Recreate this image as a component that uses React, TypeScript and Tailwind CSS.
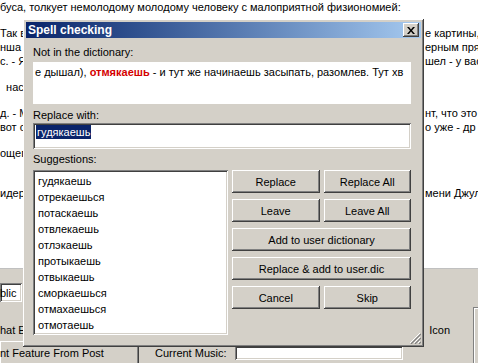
const font = "font-['Liberation_Sans',Arial,sans-serif]";

const pageLines: { left: string; right: string; mt: string }[] = [
  { left: "Так в", right: "е картины,", mt: "mt-[12px]" },
  { left: "нша к", right: "ерным пря", mt: "mt-0" },
  { left: "с. - Я", right: "шел - у вас", mt: "mt-0" },
  { left: "  нас", right: "", mt: "mt-[12px]" },
  { left: "д. - М", right: "нт, что это", mt: "mt-[12px]" },
  { left: "вот о", right: "о уже - др", mt: "mt-0" },
  { left: "ощег", right: "", mt: "mt-[12px]" },
  { left: "идерт", right: "мени Джул", mt: "mt-[26px]" },
];

const suggestions = [
  "гудякаешь",
  "отрекаешься",
  "потаскаешь",
  "отвлекаешь",
  "отлэкаешь",
  "протыкаешь",
  "отвыкаешь",
  "сморкаешься",
  "отмахаешься",
  "отмотаешь",
];

const raised =
  "bg-[#d4d0c8] shadow-[inset_-1px_-1px_#404040,inset_1px_1px_#ffffff,inset_-2px_-2px_#808080,inset_2px_2px_#d4d0c8]";
const sunken =
  "bg-white shadow-[inset_1px_1px_#808080,inset_-1px_-1px_#ffffff,inset_2px_2px_#404040,inset_-2px_-2px_#d4d0c8]";

function Btn({ label, className = "" }: { label: string; className?: string }) {
  return (
    <div
      className={`${raised} flex h-[23px] items-center justify-center text-[11px] text-black ${className}`}
    >
      {label}
    </div>
  );
}

function SpellDialog() {
  return (
    <div
      className={`absolute left-[23px] top-[19px] flex h-[328px] w-[401px] flex-col p-[3px] ${raised} shadow-[inset_-1px_-1px_#404040,inset_1px_1px_#d4d0c8,inset_-2px_-2px_#808080,inset_2px_2px_#ffffff]`}
    >
      <div className="flex h-[16px] items-center justify-between bg-gradient-to-r from-[#0a246a] to-[#a6caf0] pl-[2px] pr-[2px]">
        <span className="text-[12px] font-bold leading-none text-white">Spell checking</span>
        <div className={`${raised} flex h-[14px] w-[16px] items-center justify-center`}>
          <svg width="8" height="7" viewBox="0 0 8 7">
            <path d="M0 0h2l2 2.5L6 0h2L5 3.5 8 7H6L4 4.5 2 7H0l3-3.5z" fill="#000" />
          </svg>
        </div>
      </div>

      <div className="relative flex flex-1 flex-col pl-[7px] pr-[10px] pt-[7px] text-[11px] leading-[14px] text-black">
        <div>Not in the dictionary:</div>
        <div className="mt-[3px] h-[42px] overflow-hidden whitespace-nowrap bg-white pl-[2px] pt-[3px]">
          е дышал), <b className="text-[#d40000]">отмякаешь</b> - и тут же начинаешь засыпать, разомлев. Тут хв
        </div>

        <div className="mt-[4px]">Replace with:</div>
        <div className={`${sunken} mt-[1px] h-[26px] pl-[3px] pt-[2px]`}>
          <span className="inline-block bg-[#0a246a] px-[1px] leading-[14px] text-white">гудякаешь</span>
        </div>

        <div className="mt-[3px]">Suggestions:</div>
        <div className="mt-[4px] flex gap-[4px]">
          <div className={`${sunken} h-[165px] w-[195px] pl-[5px] pt-[3px]`}>
            {suggestions.map((s) => (
              <div key={s} className="h-[16px] leading-[16px]">
                {s}
              </div>
            ))}
          </div>
          <div className="flex flex-1 flex-col gap-[6px]">
            <div className="grid grid-cols-2 gap-[4px]">
              <Btn label="Replace" />
              <Btn label="Replace All" />
            </div>
            <div className="grid grid-cols-2 gap-[4px]">
              <Btn label="Leave" />
              <Btn label="Leave All" />
            </div>
            <Btn label="Add to user dictionary" />
            <Btn label="Replace & add to user.dic" />
            <div className="grid grid-cols-2 gap-[4px]">
              <Btn label="Cancel" />
              <Btn label="Skip" />
            </div>
          </div>
        </div>

        <svg
          className="absolute bottom-[0px] right-[0px]"
          width="12"
          height="12"
          viewBox="0 0 12 12"
        >
          <path d="M11 1L1 11M11 5L5 11M11 9L9 11" stroke="#ffffff" strokeWidth="1" />
          <path d="M12 2L2 12M12 6L6 12M12 10L10 12" stroke="#808080" strokeWidth="1.2" />
        </svg>
      </div>
    </div>
  );
}

export default function App() {
  return (
    <div
      className={`relative flex h-[363px] w-[478px] flex-col overflow-hidden bg-white text-[11px] leading-[14px] text-black ${font}`}
    >
      <div className="whitespace-pre">
        <div>буса, толкует немолодому молодому человеку с малоприятной физиономией:</div>
        {pageLines.map((l, i) => (
          <div key={i} className={`flex justify-between ${l.mt}`}>
            <span>{l.left}</span>
            <span className="w-[53px] overflow-hidden">{l.right}</span>
          </div>
        ))}
      </div>

      <div className="mt-[68px] flex flex-1 border-t border-[#c0c0c0] bg-[#d4d0c8]">
        <div className="flex flex-1 flex-col">
          <div className={`${sunken} mt-[14px] h-[19px] w-[22px] pt-[3px] text-left`}>blic</div>
          <div className="mt-[21px] flex h-[14px] items-center justify-between">
            <span>hat E</span>
            <span className="mr-[23px]">Icon</span>
          </div>
          <div className="mt-[4px] flex h-[24px] items-center">
            <div className={`${raised} flex h-[24px] w-[139px] items-center`}>nt Feature From Post</div>
            <span className="ml-[16px]">Current Music:</span>
            <div className={`${sunken} ml-[8px] h-[14px] w-[168px]`} />
          </div>
        </div>
        <div className="mt-[38px] w-[5px] border-l border-t border-[#808080] shadow-[inset_1px_1px_#ffffff]" />
      </div>

      <SpellDialog />
    </div>
  );
}
